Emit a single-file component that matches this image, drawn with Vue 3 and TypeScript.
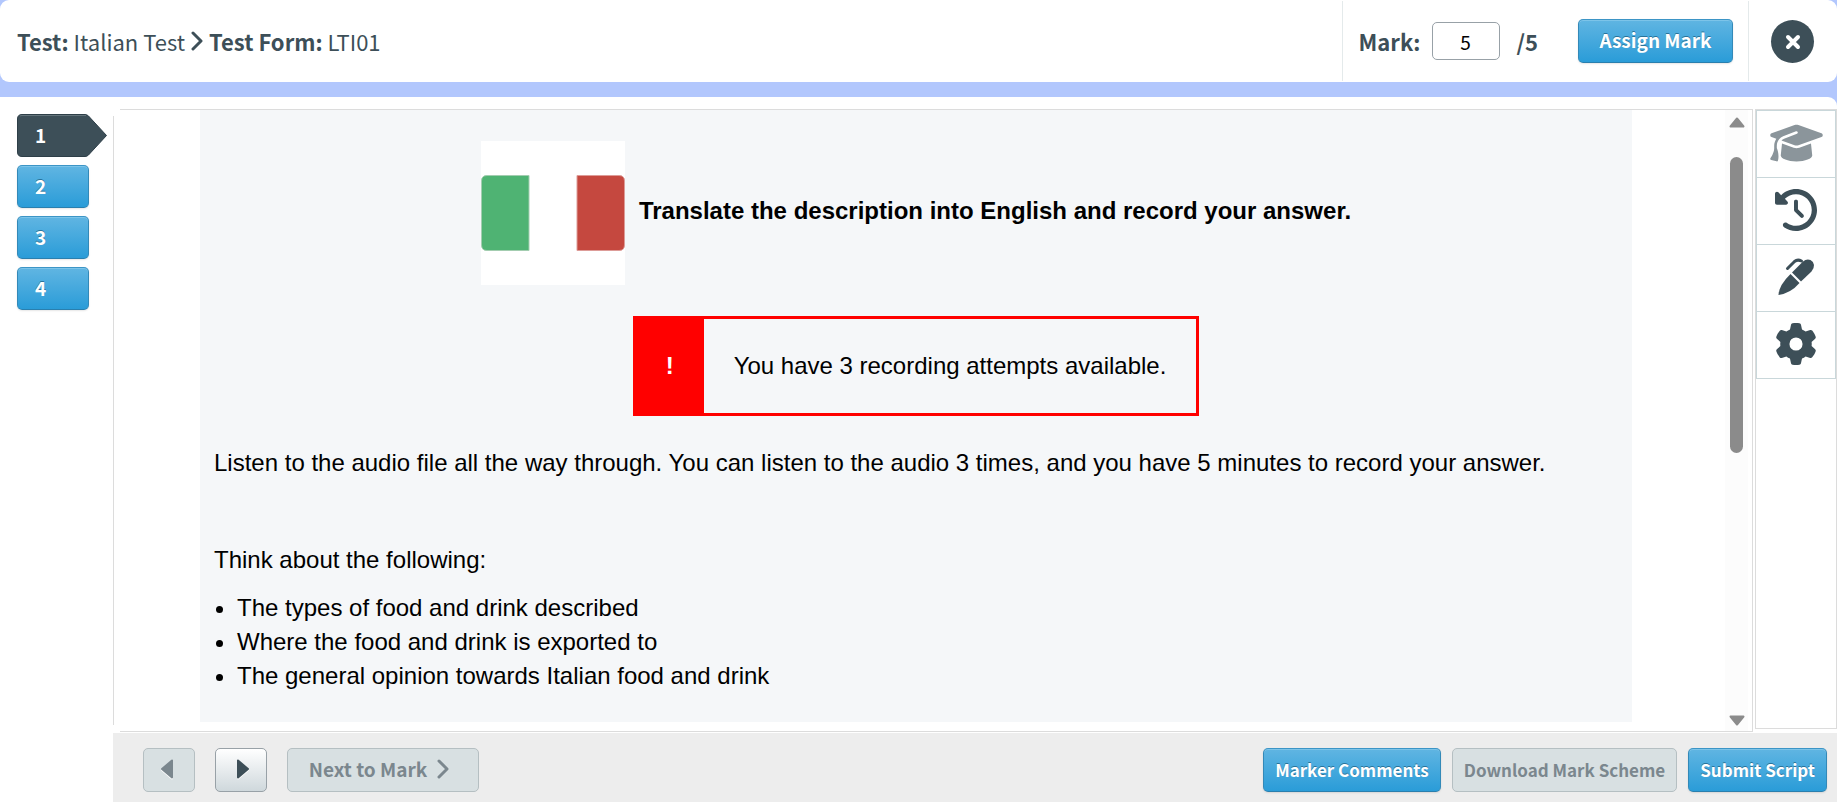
<script setup lang="ts">
import { ref } from 'vue'

const items = [1, 2, 3, 4]
const current = ref(1)
const mark = ref('5')
const points = [
  'The types of food and drink described',
  'Where the food and drink is exported to',
  'The general opinion towards Italian food and drink',
]
</script>

<template>
  <div class="app">
    <header class="topbar">
      <h1 class="crumbs">
        <span><strong>Test:</strong> Italian Test</span>
        <svg class="crumb-arrow" viewBox="0 0 12 20" aria-hidden="true"><path d="M2 2 10 10 2 18" /></svg>
        <span><strong>Test Form:</strong> LTI01</span>
      </h1>
      <div class="marking">
        <label for="mark">Mark:</label>
        <input id="mark" v-model="mark" type="text" />
        <span class="total">/5</span>
        <button class="btn primary assign" type="button">Assign Mark</button>
      </div>
      <div class="closing">
        <button class="close" type="button" aria-label="Close">
          <svg viewBox="0 0 18 18" aria-hidden="true"><path d="M4 4 14 14M14 4 4 14" /></svg>
        </button>
      </div>
    </header>

    <main class="workspace">
      <nav class="items" aria-label="Items">
        <button
          v-for="n in items"
          :key="n"
          type="button"
          class="item"
          :class="{ active: n === current }"
          @click="current = n"
        >
          <svg v-if="n === current" class="tag" viewBox="0 0 90 43" aria-hidden="true">
            <path class="tag-body" d="M5 .5H68Q70 .5 71.500 2L89.500 21.500 71.500 41Q70 42.500 68 42.500H5Q.5 42.500 .5 38V5Q.5 .5 5 .5Z" />
            <path class="tag-shine" d="M3 2Q4 1.500 5 1.500H69" />
          </svg>
          <span>{{ n }}</span>
        </button>
      </nav>

      <div class="stage">
        <div class="panels">
          <section class="viewer">
            <article class="question">
              <div class="prompt">
                <svg class="flag" viewBox="0 0 144 144" role="img" aria-label="Italian flag">
                  <rect width="144" height="144" fill="#fff" />
                  <path d="M48 34.500H6Q.5 34.500 .5 40V104Q.5 109.500 6 109.500H48Z" fill="#4fb373" stroke="#a3cdb0" />
                  <path d="M96 34.500H138Q143.500 34.500 143.500 40V104Q143.500 109.500 138 109.500H96Z" fill="#c5483f" stroke="#dd9c98" />
                </svg>
                <h2>Translate the description into English and record your answer.</h2>
              </div>
              <div class="notice">
                <strong>!</strong>
                <p>You have 3 recording attempts available.</p>
              </div>
              <p class="instructions">
                Listen to the audio file all the way through. You can listen to the audio 3 times, and you have 5 minutes to record your answer.
              </p>
              <p class="lead">Think about the following:</p>
              <ul>
                <li v-for="p in points" :key="p">{{ p }}</li>
              </ul>
            </article>
            <div class="scroller" aria-hidden="true">
              <svg viewBox="0 0 16 11"><path d="M8 1.500 14.500 9.500H1.500Z" /></svg>
              <div class="track"><div class="thumb"></div></div>
              <svg viewBox="0 0 16 11"><path d="M8 9.500 14.500 1.500H1.500Z" /></svg>
            </div>
          </section>

          <aside class="tools">
            <button type="button" aria-label="Mark scheme" disabled>
              <svg class="wide" viewBox="0 0 640 512"><path d="M320 32c-8.100 0-16.100 1.400-23.700 4.100L15.800 137.400C6.300 140.900 0 149.900 0 160s6.300 19.100 15.800 22.600l57.900 20.900C57.300 229.300 48 259.800 48 291.900v28.100c0 28.400-10.800 57.700-22.300 80.800c-6.500 13-13.900 25.800-22.500 37.600C0 442.700-.9 448.300 .9 453.400s6 8.900 11.200 10.200l64 16c4.200 1.100 8.700 .3 12.400-2s6.300-6.100 7.100-10.400c8.600-42.800 4.300-81.200-2.100-108.700C90.300 344.300 86 329.800 80 316.500V291.900c0-30.200 10.200-58.700 27.900-81.500c12.900-15.500 29.600-28 49.200-35.700l157-61.700c8.200-3.200 17.500 .8 20.700 9s-.8 17.500-9 20.700l-157 61.700c-12.400 4.900-23.300 12.400-32.200 21.600l159.600 57.600c7.600 2.700 15.600 4.100 23.700 4.100s16.100-1.400 23.700-4.100L624.200 182.600c9.500-3.400 15.800-12.500 15.800-22.600s-6.300-19.100-15.800-22.600L343.700 36.100C336.100 33.400 328.100 32 320 32zM128 408c0 35.300 86 72 192 72s192-36.700 192-72L496.700 262.600 354.500 314c-11.100 4-22.800 6-34.500 6s-23.500-2-34.500-6L143.300 262.600 128 408z" /></svg>
            </button>
            <button type="button" aria-label="History">
              <svg viewBox="0 0 512 512"><path d="M75 75L41 41C25.900 25.900 0 36.600 0 57.900V168c0 13.300 10.700 24 24 24H134.100c21.400 0 32.100-25.900 17-41l-30.800-30.800C155 85.500 203 64 256 64c106 0 192 86 192 192s-86 192-192 192c-40.800 0-78.600-12.700-109.700-34.400c-14.500-10.100-34.400-6.600-44.600 7.900s-6.600 34.400 7.900 44.600C151.200 495 201.700 512 256 512c141.400 0 256-114.600 256-256S397.400 0 256 0C185.300 0 121.300 28.700 75 75zm181 53c-13.300 0-24 10.700-24 24V256c0 6.400 2.500 12.500 7 17l72 72c9.400 9.400 24.600 9.400 33.900 0s9.400-24.600 0-33.900l-65-65V152c0-13.300-10.700-24-24-24z" /></svg>
            </button>
            <button type="button" aria-label="Annotate">
              <svg viewBox="0 0 42 42">
                <path d="M17 16.500 28 5.500Q31.500 2.500 35.500 4Q38.500 5.500 39 9Q39.200 12.500 36.500 15.500L26 25.500Z" />
                <path d="M15.500 18 24.500 27Q16 37 3.500 39Q4 29 15.500 18Z" />
                <path class="clip" d="M12.500 12.500 19.500 5.500Q22.500 3 26.500 5" />
              </svg>
            </button>
            <button type="button" aria-label="Settings">
              <svg viewBox="0 0 512 512"><path d="M495.900 166.600c3.200 8.700 .5 18.400-6.400 24.600l-43.300 39.400c1.100 8.300 1.700 16.800 1.700 25.400s-.6 17.100-1.700 25.400l43.300 39.400c6.900 6.200 9.600 15.900 6.400 24.600c-4.400 11.900-9.700 23.300-15.800 34.300l-4.700 8.100c-6.600 11-14 21.400-22.100 31.200c-5.900 7.200-15.700 9.600-24.500 6.800l-55.700-17.700c-13.400 10.300-28.200 18.900-44 25.400l-12.500 57.100c-2 9.100-9 16.300-18.200 17.800c-13.800 2.300-28 3.500-42.500 3.500s-28.700-1.200-42.500-3.500c-9.200-1.500-16.200-8.700-18.200-17.800l-12.500-57.100c-15.800-6.500-30.600-15.100-44-25.400L83.100 425.900c-8.800 2.800-18.600 .3-24.500-6.800c-8.100-9.800-15.500-20.200-22.100-31.200l-4.700-8.100c-6.100-11-11.400-22.400-15.800-34.300c-3.200-8.700-.5-18.400 6.400-24.600l43.300-39.400C64.600 273.100 64 264.600 64 256s.6-17.100 1.700-25.400L22.400 191.200c-6.900-6.200-9.600-15.900-6.400-24.600c4.400-11.900 9.700-23.300 15.800-34.300l4.700-8.100c6.600-11 14-21.400 22.100-31.200c5.900-7.200 15.700-9.600 24.500-6.800l55.700 17.700c13.400-10.300 28.200-18.900 44-25.400l12.500-57.100c2-9.100 9-16.300 18.200-17.800C227.300 1.200 241.500 0 256 0s28.700 1.200 42.500 3.500c9.200 1.500 16.200 8.700 18.200 17.800l12.500 57.100c15.800 6.500 30.600 15.100 44 25.400l55.700-17.700c8.800-2.800 18.600-.3 24.500 6.800c8.100 9.800 15.500 20.200 22.100 31.200l4.700 8.100c6.100 11 11.400 22.400 15.800 34.300zM256 336a80 80 0 1 0 0-160 80 80 0 1 0 0 160z" /></svg>
            </button>
          </aside>
        </div>

        <footer class="actions">
          <button class="btn step back" type="button" aria-label="Previous" disabled>
            <svg viewBox="0 0 14 22"><path d="M12 2.500V19.500L2 11Z" /></svg>
          </button>
          <button class="btn step forward" type="button" aria-label="Next">
            <svg viewBox="0 0 14 22"><path d="M2 2.500V19.500L12 11Z" /></svg>
          </button>
          <button class="btn next" type="button" disabled>
            Next to Mark
            <svg class="crumb-arrow" viewBox="0 0 12 20" aria-hidden="true"><path d="M2 2 10 10 2 18" /></svg>
          </button>
          <span class="spacer"></span>
          <button class="btn compact primary" type="button">Marker Comments</button>
          <button class="btn compact" type="button" disabled>Download Mark Scheme</button>
          <button class="btn compact primary" type="button">Submit Script</button>
        </footer>
      </div>
    </main>
  </div>
</template>

<style>
body {
  margin: 0;
  background: #b2c7fd;
}
</style>

<style scoped>
* {
  box-sizing: border-box;
}

.app {
  display: flex;
  flex-direction: column;
  gap: 15px;
  min-height: 100vh;
  color: #3d4f58;
  font-family: "Noto Sans CJK SC", "Open Sans", sans-serif;
}

button,
input {
  font-family: inherit;
  margin: 0;
}

h1, h2, p, ul {
  margin: 0;
}

.topbar {
  display: flex;
  align-items: stretch;
  height: 82px;
  padding: 1px 0;
  background: #fff;
  border-radius: 9px;
}

.crumbs {
  flex: 1;
  display: flex;
  align-items: center;
  gap: 6px;
  padding-left: 17px;
  font-size: 22px;
  line-height: 32px;
  font-weight: 400;
  white-space: nowrap;
}

.crumb-arrow {
  width: 12px;
  height: 20px;
  fill: none;
  stroke: currentColor;
  stroke-width: 3;
  stroke-linecap: round;
  stroke-linejoin: round;
}

.marking {
  display: flex;
  align-items: center;
  padding: 0 15px 0 16px;
  border-left: 1px solid #e4eaeb;
  font-size: 22px;
  line-height: 32px;
  font-weight: 700;
}

.marking input {
  width: 68px;
  height: 38px;
  margin: 0 17px 0 11px;
  padding: 0;
  border: 1px solid #98a1a7;
  border-radius: 5px;
  background: #fff;
  color: #000;
  font-size: 19px;
  text-align: center;
}

.assign {
  width: 155px;
  margin-left: 40px;
}

.closing {
  display: flex;
  align-items: center;
  padding: 1px 23px 0 22px;
  border-left: 1px solid #e4eaeb;
}

.close {
  display: grid;
  place-items: center;
  width: 43px;
  height: 43px;
  padding: 0;
  border: 0;
  border-radius: 50%;
  background: #3d4f58;
}

.close svg {
  width: 18px;
  height: 18px;
  stroke: #fff;
  stroke-width: 4;
  stroke-linecap: round;
}

.btn {
  display: flex;
  align-items: center;
  justify-content: center;
  height: 44px;
  padding: 0 0 2px;
  border: 1px solid #b5bfc2;
  border-radius: 5px;
  background: #d8e0e2;
  color: #7b878e;
  font-size: 19px;
  line-height: 28px;
  font-weight: 700;
  white-space: nowrap;
}

.btn.primary,
.item {
  border-color: #3c95c6 #3389b8 #2a7fae;
  background: linear-gradient(#60b5e2, #2a9cd8);
  color: #fff;
  text-shadow: 0 -1px 0 #2a7399;
  box-shadow: inset 0 1px 0 #7cc4e9, 0 1px 2px #0000001a;
}

.workspace {
  flex: 1;
  display: flex;
  background: #fff;
  border-top-right-radius: 9px;
}

.items {
  display: flex;
  flex-direction: column;
  gap: 8px;
  width: 113px;
  padding: 17px 0 0 17px;
}

.item {
  position: relative;
  width: 72px;
  height: 43px;
  padding: 0 0 2px 17px;
  border-width: 1px;
  border-style: solid;
  border-radius: 5px;
  font-size: 19px;
  line-height: 28px;
  font-weight: 700;
  text-align: left;
}

.item.active {
  width: 90px;
  padding-left: 18px;
  border: 0;
  background: none;
  box-shadow: none;
  text-shadow: none;
}

.item span {
  position: relative;
}

.tag {
  position: absolute;
  inset: 0;
  width: 100%;
  height: 100%;
}

.tag-body {
  fill: #3d4f58;
  stroke: #2e3f48;
}

.tag-shine {
  fill: none;
  stroke: #64747b;
}

.stage {
  flex: 1;
  display: flex;
  flex-direction: column;
  min-width: 0;
}

.panels {
  flex: 1;
  display: flex;
  gap: 2px;
  padding-top: 12px;
}

.viewer {
  position: relative;
  flex: 1;
  display: flex;
  margin-bottom: 1px;
  border: 1px solid #dcdcdc;
}

/* Open corners on the left edge of the frame */
.viewer::before,
.viewer::after {
  content: "";
  position: absolute;
  left: -1px;
  width: 7px;
  height: 7px;
  background: #fff;
}

.viewer::before {
  top: -1px;
}

.viewer::after {
  bottom: -1px;
}

.question {
  flex: 1;
  margin: 0 93px 9px 86px;
  padding: 31px 14px 20px;
  background: #f5f7f9;
  color: #000;
  font-family: "Liberation Sans", Arial, sans-serif;
  font-size: 24px;
  line-height: 34px;
}

.prompt {
  display: flex;
  align-items: center;
  justify-content: center;
  gap: 14px;
}

.flag {
  width: 144px;
  height: 144px;
}

.prompt h2 {
  padding-bottom: 4px;
  font-size: 24px;
  line-height: 34px;
  font-weight: 700;
}

.notice {
  display: flex;
  width: fit-content;
  height: 100px;
  margin: 31px auto 30px;
  border: 3px solid #f00;
}

.notice strong {
  display: grid;
  place-items: center;
  width: 68px;
  background: #f00;
  color: #fff;
}

.notice p {
  align-self: center;
  padding: 0 30px;
}

.lead {
  margin: 63px 0 14px;
}

ul {
  padding-left: 23px;
}

.scroller {
  display: flex;
  flex-direction: column;
  align-items: center;
  width: 23px;
  margin-right: 4px;
  padding: 7px 0 5px;
  background: #fcfcfc;
}

.scroller svg {
  width: 16px;
  height: 11px;
  fill: #8b8b8b;
  stroke: #8b8b8b;
  stroke-width: 2;
  stroke-linejoin: round;
}

.track {
  flex: 1;
  padding: 29px 0;
}

.thumb {
  width: 13px;
  height: 56%;
  border-radius: 7px;
  background: #8b8b8b;
}

.tools {
  display: flex;
  flex-direction: column;
  width: 82px;
  margin-bottom: 4px;
  border: 1px solid #dcdcdc;
}

.tools button {
  display: grid;
  place-items: center;
  height: 67px;
  padding: 0 0 2px;
  border: 1px solid #c9d7da;
  border-bottom: 0;
  background: #fff;
}

.tools button:last-child {
  height: 68px;
  border-bottom: 1px solid #c9d7da;
}

.tools svg {
  width: 42px;
  height: 42px;
  fill: #3d4f58;
}

.tools svg.wide {
  width: 53px;
  fill: #8b959b;
}

.tools .clip {
  fill: none;
  stroke: #3d4f58;
  stroke-width: 3;
  stroke-linecap: round;
}

.actions {
  display: flex;
  align-items: center;
  gap: 11px;
  padding: 15px 10px 10px 30px;
  background: #ededed;
}

.step {
  width: 52px;
  margin-right: 9px;
}

.step svg {
  width: 14px;
  height: 22px;
  fill: currentColor;
  stroke: currentColor;
  stroke-width: 2;
  stroke-linejoin: round;
  filter: drop-shadow(0 1px 0 #fff);
}

.back {
  padding-right: 4px;
}

.forward {
  padding-left: 4px;
  border-color: #98a1a7;
  background: linear-gradient(#fff, #cfd8dc);
  color: #3d4f58;
}

.next {
  gap: 10px;
  width: 192px;
  padding-right: 8px;
}

.compact {
  padding: 0 11px;
  font-size: 17px;
}

.spacer {
  flex: 1;
}
</style>
